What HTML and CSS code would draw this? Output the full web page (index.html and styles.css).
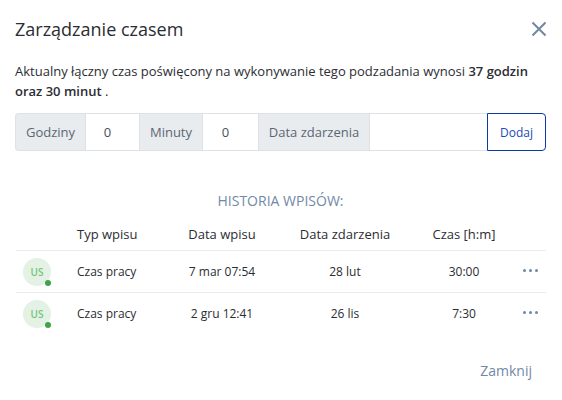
FILE: index.html
```html
<!DOCTYPE html>
<html lang="pl">
<head>
  <meta charset="UTF-8">
  <title>Zarządzanie czasem</title>
  <link rel="stylesheet" href="styles.css">
</head>
<body>
  <div class="modal">
    <div class="modal-header">
      <h1>Zarządzanie czasem</h1>
      <svg class="close-icon" width="16" height="16" viewBox="0 0 16 16"><path d="M1.5 1.5l13 13M14.5 1.5l-13 13"/></svg>
    </div>

    <p class="summary">Aktualny łączny czas poświęcony na wykonywanie tego podzadania wynosi <b>37 godzin oraz 30 minut</b> .</p>

    <div class="input-group">
      <span class="addon addon-hours">Godziny</span>
      <span class="field field-hours">0</span>
      <span class="addon addon-minutes">Minuty</span>
      <span class="field field-minutes">0</span>
      <span class="addon addon-date">Data zdarzenia</span>
      <span class="field field-date"></span>
      <button class="btn-add">Dodaj</button>
    </div>

    <h2>HISTORIA WPISÓW:</h2>

    <table class="history">
      <thead>
        <tr>
          <th class="col-avatar"></th>
          <th class="col-type">Typ wpisu</th>
          <th class="col-created">Data wpisu</th>
          <th class="col-event">Data zdarzenia</th>
          <th class="col-time">Czas [h:m]</th>
          <th class="col-menu"></th>
        </tr>
      </thead>
      <tbody>
        <tr>
          <td><span class="avatar">US</span></td>
          <td class="col-type">Czas pracy</td>
          <td>7 mar 07:54</td>
          <td>28 lut</td>
          <td>30:00</td>
          <td><span class="dots"><i></i><i></i><i></i></span></td>
        </tr>
        <tr>
          <td><span class="avatar">US</span></td>
          <td class="col-type">Czas pracy</td>
          <td>2 gru 12:41</td>
          <td>26 lis</td>
          <td>7:30</td>
          <td><span class="dots"><i></i><i></i><i></i></span></td>
        </tr>
      </tbody>
    </table>

    <div class="modal-footer">
      <button class="btn-close">Zamknij</button>
    </div>
  </div>
</body>
</html>
```

FILE: styles.css
```css
/* General */
body {
  margin: 0;
  background-color: #fff;
  color: #2b2d33;
  font-family: 'Open Sans', sans-serif;
  font-size: 12px;
  overflow: hidden;
}

.modal {
  width: 562px;
  height: 400px;
  box-sizing: border-box;
  padding: 0 16px 0 15px;
}

/* Header */
.modal-header {
  height: 58px;
  display: flex;
  justify-content: space-between;
  align-items: center;
}

.modal-header h1 {
  margin: 0;
  font-size: 18px;
  font-weight: 400;
}

.close-icon {
  margin-right: -1px;
}

.close-icon path {
  stroke: #6f88a3;
  stroke-width: 2;
  fill: none;
}

.summary {
  margin: 3px 0 0;
  font-size: 13px;
  line-height: 20px;
}

.summary b {
  font-weight: 600;
}

/* Input group */
.input-group {
  display: flex;
  height: 38px;
  margin-top: 12px;
  line-height: 36px;
}

.addon,
.field {
  box-sizing: border-box;
  border: 1px solid #dee2e6;
  border-right: none;
  text-align: center;
}

.addon {
  background-color: #e9ecef;
  color: #5b6773;
  font-size: 13px;
}

.addon-hours {
  width: 70px;
  border-radius: 4px 0 0 4px;
}

.addon-minutes {
  width: 63px;
}

.addon-date {
  width: 111px;
}

.field {
  font-size: 13px;
  color: #495057;
}

.field-hours {
  width: 54px;
  padding-right: 10px;
}

.field-minutes {
  width: 56px;
  padding-right: 10px;
}

.field-date {
  width: 118px;
}

.btn-add {
  width: 59px;
  border: 1px solid #0a3aa5;
  border-radius: 0 4px 4px 0;
  background-color: #fff;
  color: #1c4bb5;
  font-family: inherit;
  font-size: 12px;
  padding: 0;
}

/* History */
h2 {
  margin: 41px 0 0;
  font-size: 14px;
  line-height: 18px;
  font-weight: 400;
  text-align: center;
  color: #7189a6;
}

.history {
  width: 530px;
  margin: 8px 0 0 1px;
  border-collapse: collapse;
  table-layout: fixed;
}

.history th {
  height: 32px;
  padding: 0;
  font-size: 13px;
  font-weight: 500;
  color: #2b2d33;
  text-align: center;
  border-bottom: 1px solid #e9ecef;
}

.history td {
  height: 41px;
  padding: 0;
  text-align: center;
  border-bottom: 1px solid #e9ecef;
}

.history tbody tr:last-child td {
  border-bottom: none;
}

.history .col-type {
  text-align: left;
}

.col-avatar {
  width: 61px;
}

.col-type {
  width: 90px;
}

.col-created {
  width: 110px;
}

.col-event {
  width: 136px;
}

.col-time {
  width: 102px;
}

.avatar {
  position: relative;
  display: block;
  width: 28px;
  height: 28px;
  margin-left: 7px;
  border-radius: 50%;
  background-color: #e3f2e4;
  color: #76c47b;
  font-size: 10px;
  font-weight: 600;
  line-height: 28px;
  text-align: center;
}

.avatar::after {
  content: "";
  position: absolute;
  right: 0;
  bottom: 0;
  width: 6px;
  height: 6px;
  border-radius: 50%;
  background-color: #3fa34a;
}

.dots {
  display: flex;
  justify-content: center;
  gap: 3px;
  margin-top: -3px;
}

.dots i {
  width: 3px;
  height: 3px;
  border-radius: 50%;
  background-color: #6f88a3;
}

/* Footer */
.modal-footer {
  display: flex;
  justify-content: flex-end;
  margin-top: 27px;
}

.btn-close {
  border: none;
  background: none;
  padding: 0;
  margin-right: 14px;
  font-family: inherit;
  font-size: 14px;
  line-height: 20px;
  color: #7189a6;
}
```
